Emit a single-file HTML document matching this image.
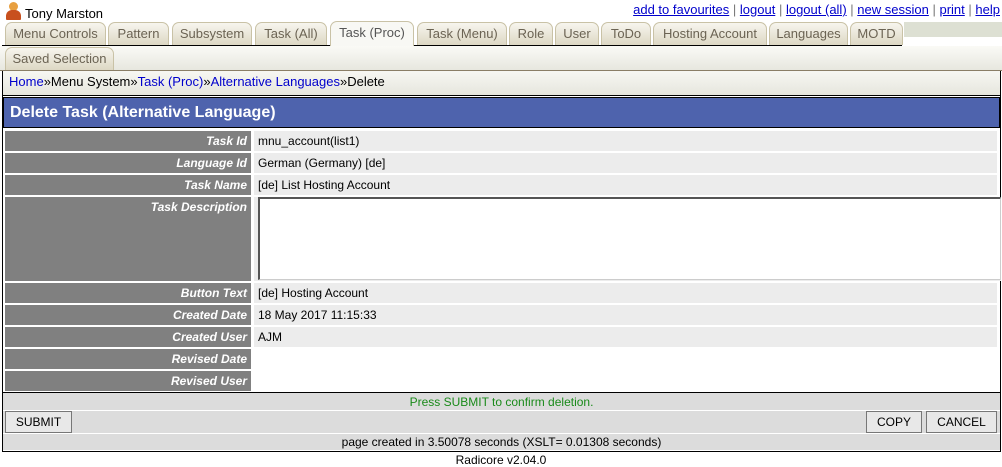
<!DOCTYPE html>
<html><head><meta charset="utf-8"><style>
*{margin:0;padding:0;box-sizing:border-box}
body{width:1002px;height:467px;background:#fff;font-family:"Liberation Sans",sans-serif;position:relative;overflow:hidden}
.a{position:absolute}
.tab{position:absolute;height:23px;border:1px solid #c9c2a6;border-bottom:none;border-radius:7px 7px 0 0;background:linear-gradient(#f7f5ee,#ddd8c4);color:#6b6353;font-size:13px;line-height:22px;text-align:center}
.lab{position:absolute;left:5px;width:246px;background:#808080;color:#fff;font-weight:bold;font-style:italic;font-size:12px;text-align:right;padding-right:4px;line-height:20px}
.val{position:absolute;left:254px;width:743px;background:#ececec;font-size:12px;line-height:20px;padding-left:4px;color:#000}
.btn{position:absolute;top:411px;height:22px;border:1px solid #777;background:#e8e8e8;font-size:12px;line-height:20px;text-align:center}
a{color:#00c}
.s{color:#777}
</style></head><body>
<div class="a" style="left:5px;top:2px;width:16px;height:18px">
 <div class="a" style="left:4px;top:0;width:9px;height:9px;border-radius:50%;background:#e8a040"></div>
 <div class="a" style="left:1px;top:8px;width:15px;height:10px;border-radius:6px 6px 1px 1px;background:#c8501e"></div>
</div>
<div class="a" style="left:25px;top:6px;font-size:13px;color:#000">Tony Marston</div>
<div class="a" style="right:2px;top:2px;font-size:13px;color:#000"><a href="#">add to favourites</a> <span class="s">|</span> <a href="#">logout</a> <span class="s">|</span> <a href="#">logout (all)</a> <span class="s">|</span> <a href="#">new session</a> <span class="s">|</span> <a href="#">print</a> <span class="s">|</span> <a href="#">help</a></div>
<div class="a" style="left:904px;top:22px;width:98px;height:15px;background:#dde0d3"></div>
<div class="a" style="left:2px;top:45px;width:900px;height:1px;background:#000"></div>
<div class="tab" style="left:5px;top:22px;width:101px">Menu Controls</div>
<div class="tab" style="left:108px;top:22px;width:61px">Pattern</div>
<div class="tab" style="left:172px;top:22px;width:80px">Subsystem</div>
<div class="tab" style="left:255px;top:22px;width:72px">Task (All)</div>
<div class="tab" style="left:330px;top:21px;width:84px;height:25px;background:#f8f8f4;color:#555">Task (Proc)</div>
<div class="tab" style="left:417px;top:22px;width:90px">Task (Menu)</div>
<div class="tab" style="left:509px;top:22px;width:44px">Role</div>
<div class="tab" style="left:555px;top:22px;width:44px">User</div>
<div class="tab" style="left:601px;top:22px;width:50px">ToDo</div>
<div class="tab" style="left:653px;top:22px;width:114px">Hosting Account</div>
<div class="tab" style="left:769px;top:22px;width:79px">Languages</div>
<div class="tab" style="left:850px;top:22px;width:53px">MOTD</div>
<div class="a" style="left:0;top:46px;width:1002px;height:25px;background:linear-gradient(#fafaf6,#e6e6de)"></div>
<div class="tab" style="left:5px;top:47px;width:109px">Saved Selection</div>
<div class="a" style="left:0;top:70px;width:1002px;height:1px;background:#8a7e66"></div>
<div class="a" style="left:2px;top:71px;width:999px;height:25px;border:1px solid #000;border-top:none;background:linear-gradient(#f7f7f2,#e6e6de);font-size:13px;line-height:22px;padding-left:6px;color:#000"><a href="#" style="text-decoration:none">Home</a>»Menu System»<a href="#" style="text-decoration:none">Task (Proc)</a>»<a href="#" style="text-decoration:none">Alternative Languages</a>»Delete</div>
<div class="a" style="left:2px;top:96px;width:999px;height:356px;border:1px solid #000;border-top:none"></div>
<div class="a" style="left:3px;top:97px;width:997px;height:31px;background:#4e63ad;border:1px solid #000;color:#fff;font-weight:bold;font-size:16px;line-height:29px;padding-left:6px">Delete Task (Alternative Language)</div>
<div class="lab" style="top:131px">Task Id</div><div class="val" style="top:131px">mnu_account(list1)</div>
<div class="lab" style="top:153px">Language Id</div><div class="val" style="top:153px">German (Germany) [de]</div>
<div class="lab" style="top:175px">Task Name</div><div class="val" style="top:175px">[de] List Hosting Account</div>
<div class="lab" style="top:197px;height:84px">Task Description</div>
<div class="a" style="left:254px;top:197px;width:747px;height:84px;background:#ececec"></div>
<div class="a" style="left:258px;top:197px;width:743px;height:83px;background:#fff;border:1px solid #ccc;border-top:2px solid #555;border-left:2px solid #555"></div>
<div class="lab" style="top:283px">Button Text</div><div class="val" style="top:283px">[de] Hosting Account</div>
<div class="lab" style="top:305px">Created Date</div><div class="val" style="top:305px">18 May 2017 11:15:33</div>
<div class="lab" style="top:327px">Created User</div><div class="val" style="top:327px">AJM</div>
<div class="lab" style="top:349px">Revised Date</div><div class="val" style="top:349px"></div>
<div class="lab" style="top:371px">Revised User</div><div class="val" style="top:371px"></div>
<div class="a" style="left:3px;top:392px;width:997px;height:1px;background:#000"></div>
<div class="a" style="left:3px;top:393px;width:997px;height:57px;background:#dcdcdc"></div>
<div class="a" style="left:3px;top:394px;width:997px;text-align:center;font-size:12px;line-height:17px;color:#1a8a1a">Press SUBMIT to confirm deletion.</div>
<div class="a" style="left:3px;top:410px;width:997px;height:1px;background:#fff"></div>
<div class="a" style="left:3px;top:433px;width:997px;height:1px;background:#fff"></div>
<div class="btn" style="left:5px;width:67px">SUBMIT</div>
<div class="btn" style="left:866px;width:56px">COPY</div>
<div class="btn" style="left:926px;width:71px">CANCEL</div>
<div class="a" style="left:3px;top:434px;width:997px;text-align:center;font-size:12px;line-height:16px;color:#000">page created in 3.50078 seconds (XSLT= 0.01308 seconds)</div>
<div class="a" style="left:0;top:453px;width:1002px;text-align:center;font-size:12px;color:#000">Radicore v2.04.0</div>
</body></html>
